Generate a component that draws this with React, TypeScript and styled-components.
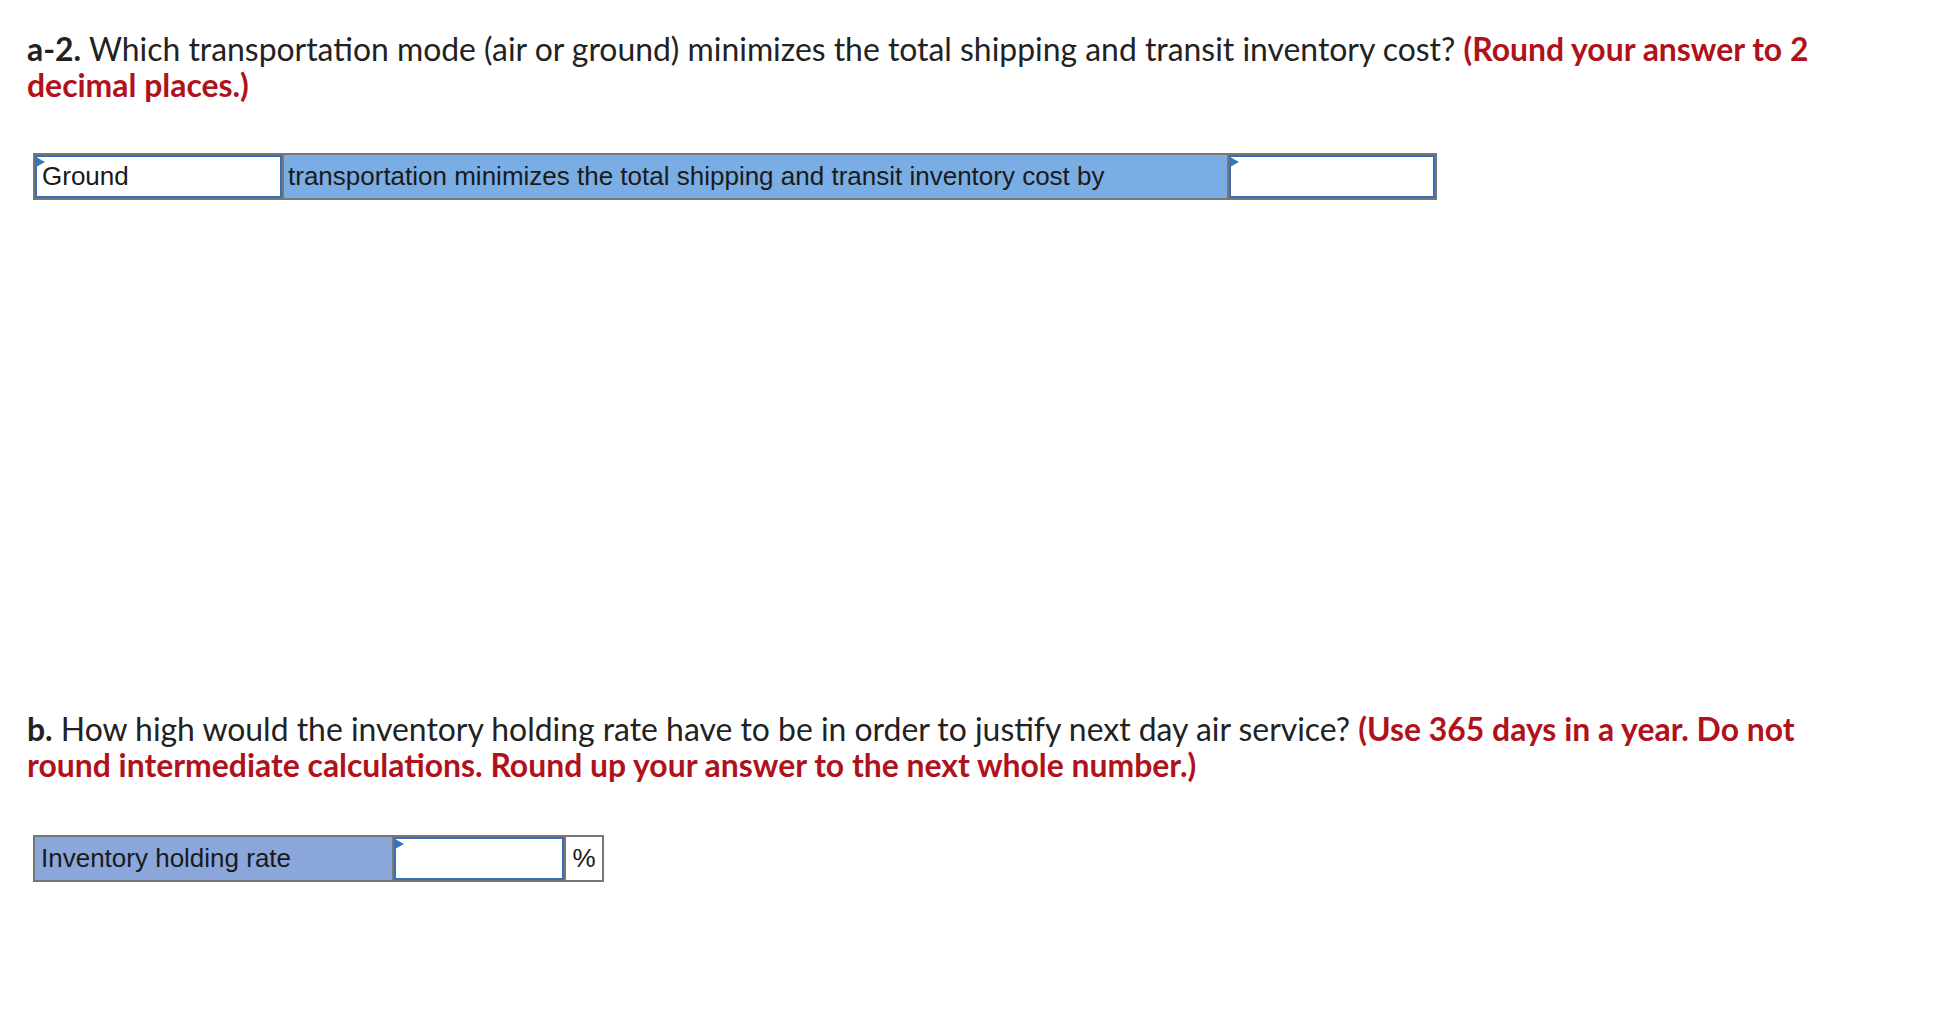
import React from "react";
import styled, { createGlobalStyle } from "styled-components";

const Global = createGlobalStyle`
  html, body { margin: 0; padding: 0; background: #ffffff; }
  body { font-family: Lato, "Open Sans", sans-serif; color: #222222; }
`;

const Page = styled.div`
  padding: 32px 0 0 27px;
  width: 1812px;
`;

const Part = styled.section<{ $minHeight?: number }>`
  min-height: ${(p) => (p.$minHeight ? `${p.$minHeight}px` : "auto")};
`;

const Prompt = styled.p`
  margin: 0;
  font-family: Lato, "Open Sans", sans-serif;
  font-size: 31.9px;
  line-height: 35.5px;
  color: #222222;
`;

const Label = styled.b`
  font-weight: 700;
  color: #222222;
`;

const Hint = styled.b`
  font-weight: 700;
  color: #b0121b;
`;

const Row = styled.div<{ $top: number }>`
  display: flex;
  align-items: stretch;
  width: fit-content;
  margin: ${(p) => p.$top}px 0 0 6px;
  border: 2px solid #777777;
  font-family: "Liberation Sans", Arial, sans-serif;
  font-size: 26px;
  color: #1a1a1a;
`;

const Cell = styled.div<{ $width: number; $bg?: string; $divider?: boolean; $height: number; $pad?: number }>`
  position: relative;
  box-sizing: border-box;
  width: ${(p) => p.$width}px;
  height: ${(p) => p.$height}px;
  background: ${(p) => p.$bg || "#ffffff"};
  border-left: ${(p) => (p.$divider ? "2px solid #777777" : "none")};
  display: flex;
  align-items: center;
  padding: 0 ${(p) => p.$pad ?? 4}px;
  white-space: nowrap;
`;

const Field = styled.div<{ $width: number; $height: number; $divider?: boolean }>`
  position: relative;
  box-sizing: border-box;
  width: ${(p) => p.$width}px;
  height: ${(p) => p.$height}px;
  border-left: ${(p) => (p.$divider ? "2px solid #777777" : "none")};
  background: #ffffff;
  display: flex;
`;

const FieldBox = styled.div`
  flex: 1;
  box-sizing: border-box;
  border: 2px solid #3a6fb4;
  background: #ffffff;
  display: flex;
  align-items: center;
  padding: 0 5px;
  white-space: nowrap;
`;

const Marker = styled.span`
  position: absolute;
  left: 1px;
  top: 2px;
  width: 0;
  height: 0;
  border-top: 5px solid transparent;
  border-bottom: 5px solid transparent;
  border-left: 9px solid #3a74b8;
`;

const Unit = styled(Cell)`
  justify-content: center;
  padding: 0;
`;

export default function App() {
  return (
    <>
      <Global />
      <Page>
        <Part $minHeight={680}>
          <Prompt>
            <Label>a-2.</Label> Which transportation mode (air or ground) minimizes the total shipping and transit
            inventory cost? <Hint>(Round your answer to 2 decimal places.)</Hint>
          </Prompt>
          <Row $top={50}>
            <Field $width={247} $height={43}>
              <FieldBox>Ground</FieldBox>
              <Marker />
            </Field>
            <Cell $width={945} $height={43} $bg="#7aade3" $divider>
              transportation minimizes the total shipping and transit inventory cost by
            </Cell>
            <Field $width={208} $height={43} $divider>
              <FieldBox />
              <Marker />
            </Field>
          </Row>
        </Part>
        <Part>
          <Prompt>
            <Label>b.</Label> How high would the inventory holding rate have to be in order to justify next day air
            service? <Hint>(Use 365 days in a year. Do not round intermediate calculations. Round up your answer to the next whole number.)</Hint>
          </Prompt>
          <Row $top={52}>
            <Cell $width={357} $height={43} $bg="#8aa6da" $pad={6}>
              Inventory holding rate
            </Cell>
            <Field $width={172} $height={43} $divider>
              <FieldBox />
              <Marker />
            </Field>
            <Unit $width={38} $height={43} $divider>
              %
            </Unit>
          </Row>
        </Part>
      </Page>
    </>
  );
}
